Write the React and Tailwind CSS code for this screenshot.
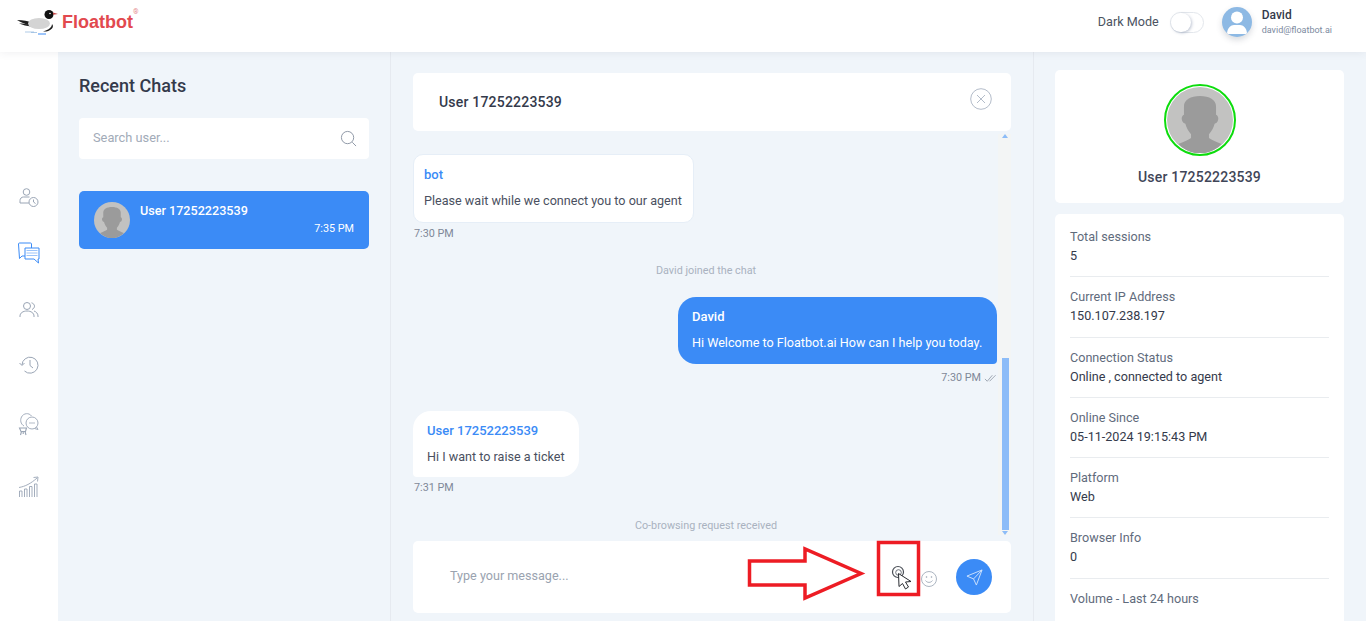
import React from "react";

const Silhouette = ({ className }) => (
  <svg viewBox="0 0 70 70" className={className}>
    <circle cx="35" cy="35" r="35" fill="#c2c2c1" />
    <path
      d="M35 9.500c-10 0-17 4-17 11v9c-2 1-3 3-2 6 .6 2 2 3 3.500 3.500 1 4 3 8 6 11v4c-3 2-8 4-13.500 6.500 6 6 14 10 23 10s17-4 23-10c-5.500-2.500-10.500-4.500-13.500-6.500v-4c3-3 5-7 6-11 1.500-.5 3-1.500 3.500-3.500 1-3 0-5-2-6v-9c0-7-7-11-17-11z"
      fill="#9b9b9b"
    />
  </svg>
);

const Logo = () => (
  <svg viewBox="0 0 44 26" className="h-[26px] w-[44px]">
    <path d="M0 11c6 .2 11 1 15 2.500l-2 3C9 15.500 4 13.500 0 11z" fill="#1c1c1c" />
    <path d="M2 14.500c4 0 8 .5 11 1.500l1 1.500c-4-.5-8-1.500-12-3z" fill="#1c1c1c" />
    <ellipse cx="22" cy="14.500" rx="11" ry="5.500" fill="#d4d4d4" />
    <path d="M35 15c0 3-3 6-9 7.500 3 .3 6-.2 9-3 1.500-1.500 1-3.500 0-4.500z" fill="#1c1c1c" />
    <circle cx="32" cy="5.500" r="4.500" fill="#111" />
    <circle cx="33" cy="4.500" r="0.800" fill="#fff" />
    <path d="M36 3.500l5 1.500-5 .8z" fill="#c64a4a" />
    <path d="M8 23h9M14 23.500h6" stroke="#8db4dc" strokeWidth="0.7" fill="none" />
    <path d="M21 25h8" stroke="#3b8bf6" strokeWidth="1" fill="none" />
  </svg>
);

const railStroke = { fill: "none", stroke: "#9aa5b5", strokeWidth: 1 };

const ScheduleIcon = () => (
  <svg viewBox="0 0 20 20" className="h-[20px] w-[20px]" {...railStroke}>
    <circle cx="7.500" cy="4" r="3.300" />
    <path d="M1 15v-2.500c0-2 1.500-3.500 3.500-3.500h6" />
    <path d="M1 15h9" />
    <circle cx="14.500" cy="14" r="4.500" />
    <path d="M14.500 11.500V14l2 1.500" />
  </svg>
);

const ChatsIcon = () => (
  <svg viewBox="0 0 22 22" className="h-[22px] w-[22px]" fill="none" stroke="#3b8bf6" strokeWidth="1">
    <path d="M7 14H4l-2.500 2.500L.5 2c0-.6.400-1 1-1h11c.6 0 1 .4 1 1v4" />
    <path d="M7 6h14v11h-1l.5 4L16 17H7z" fill="#fff" />
    <path d="M8.500 8.500h11M8.500 11h11M8.500 13.500h11" stroke="#9cc4f9" strokeWidth="1.200" />
  </svg>
);

const UsersIcon = () => (
  <svg viewBox="0 0 20 18" className="h-[18px] w-[20px]" {...railStroke}>
    <circle cx="8" cy="5" r="3.500" />
    <path d="M1 16v-1c0-3 3-5 7-5s7 2 7 5v1" />
    <path d="M12.500 1.800c2 .6 3 2 3 3.400s-1 2.600-2.500 3.300" />
    <path d="M15 10c2 .6 4 2.500 4 5v1" />
  </svg>
);

const HistoryIcon = () => (
  <svg viewBox="0 0 20 20" className="h-[20px] w-[20px]" {...railStroke}>
    <path d="M3 10a8 8 0 1 1 2.500 6" />
    <path d="M.5 8 3 10.500 5.500 8" />
    <path d="M11 5v5.500l3 2.500" />
  </svg>
);

const SupportIcon = () => (
  <svg viewBox="0 0 22 24" className="h-[24px] w-[22px]" {...railStroke} strokeWidth="0.9">
    <path d="M6 14C2.500 12 2 8 3.500 5 5.500 1 11 .5 13.500 4" />
    <circle cx="14" cy="11" r="6" />
    <path d="M11.500 11h1M13.500 11h1M15.500 11h1" strokeWidth="1.300" />
    <path d="M18.500 15l1.500 2.500-3.500-1" />
    <path d="M1.500 16h7l-1 3.500H3zM3.500 19.500l-1 3.500M7 19.500l1 3.500M5.200 19.500v2.500" strokeWidth="1.100" />
  </svg>
);

const GrowthIcon = () => (
  <svg viewBox="0 0 22 22" className="h-[22px] w-[22px]" {...railStroke} strokeWidth="0.9">
    <path d="M1.500 21v-6h2.500v6M6.500 21v-8H9v8M11.500 21V10.500H14V21M16.500 21V8H19v13" />
    <path d="M1 11.500c6-1 12-4 18-9.500" />
    <path d="M15.500 1.500 20 1l-.5 4.500" />
  </svg>
);

const RailItem = ({ children, className }) => (
  <div className={`flex w-[58px] items-center justify-center ${className}`}>{children}</div>
);

const InfoRow = ({ label, value, last }) => (
  <div className={`h-[60.300px] pt-[10px] ${last ? "" : "border-b border-[#e9ecef]"}`}>
    <div className="text-[12.600px] leading-[19px] text-[#5f6b7c]">{label}</div>
    <div className="text-[12.600px] leading-[19px] text-[#343a4b]">{value}</div>
  </div>
);

export default function App() {
  const rows = [
    ["Total sessions", "5"],
    ["Current IP Address", "150.107.238.197"],
    ["Connection Status", "Online , connected to agent"],
    ["Online Since", "05-11-2024 19:15:43 PM"],
    ["Platform", "Web"],
    ["Browser Info", "0"],
    ["Volume - Last 24 hours", ""],
  ];

  return (
    <div className="relative h-[621px] w-[1366px] overflow-hidden bg-[#f0f5fa] font-['Roboto',sans-serif] text-[#343a4b]">
      {/* top bar */}
      <header className="relative z-10 flex h-[52px] items-start justify-between bg-white shadow-[0_1px_8px_rgba(60,70,90,0.08)]">
        <div className="flex items-start pl-[17px] pt-[9px]">
          <Logo />
          <span className="ml-[1px] mt-[1px] font-['Liberation_Sans',sans-serif] text-[18px] font-bold leading-[24px] text-[#e2494f]">
            Floatbot
          </span>
          <span className="text-[7px] leading-[7px] text-[#e58a8d]">®</span>
        </div>
        <div className="flex items-center pr-[34px] pt-[7px]">
          <span className="text-[12.600px] text-[#4b5361]">Dark Mode</span>
          <div className="ml-[11px] h-[21px] w-[34px] rounded-full border border-[#e3e7ec] bg-white">
            <div className="h-[19px] w-[20px] rounded-full bg-white shadow-[1px_1px_3px_rgba(70,90,130,0.35)]" />
          </div>
          <div className="ml-[18px] h-[30px] w-[30px] overflow-hidden rounded-full bg-[#8db9e4] shadow-[0_3px_6px_rgba(60,70,90,0.2)]">
            <svg viewBox="0 0 30 30" className="h-[30px] w-[30px]">
              <circle cx="15" cy="10.500" r="6" fill="#fff" />
              <path d="M5 27c0-6 4-9 7-9h6c3 0 7 3 7 9z" fill="#fff" />
            </svg>
          </div>
          <div className="ml-[10px]">
            <div className="text-[12px] font-medium leading-[16px] text-[#343a4b]">David</div>
            <div className="text-[9px] leading-[14px] text-[#7c8aa0]">david@floatbot.ai</div>
          </div>
        </div>
      </header>

      <div className="flex h-[569px]">
        {/* icon rail */}
        <nav className="flex w-[58px] shrink-0 flex-col bg-white pt-[135px]">
          <RailItem className="h-[22px]"><ScheduleIcon /></RailItem>
          <RailItem className="mt-[31px] h-[26px]"><ChatsIcon /></RailItem>
          <RailItem className="mt-[34px] h-[20px]"><UsersIcon /></RailItem>
          <RailItem className="mt-[35px] h-[20px]"><HistoryIcon /></RailItem>
          <RailItem className="mt-[37px] h-[24px]"><SupportIcon /></RailItem>
          <RailItem className="mt-[39px] h-[24px]"><GrowthIcon /></RailItem>
        </nav>

        {/* recent chats */}
        <aside className="w-[333px] shrink-0 border-r border-[#e6eaf0] px-[21px]">
          <h2 className="mt-[22px] text-[18px] font-medium leading-[24px] text-[#343a4b]">Recent Chats</h2>
          <div className="mt-[20px] flex h-[41px] w-[290px] items-center justify-between rounded-[4px] bg-white pl-[14px] pr-[12px]">
            <span className="mb-[2px] text-[12.800px] text-[#a2abb8]">Search user...</span>
            <svg viewBox="0 0 18 18" className="h-[17px] w-[17px]" fill="none" stroke="#8a94a3" strokeWidth="1">
              <circle cx="8" cy="8" r="6.500" />
              <path d="M13 13l4 4" />
            </svg>
          </div>
          <div className="mt-[32px] flex h-[58px] w-[290px] rounded-[5px] bg-[#3b8bf6] px-[15px] pt-[11px]">
            <Silhouette className="h-[36px] w-[36px] shrink-0" />
            <div className="ml-[10px] flex-1 text-white">
              <div className="mt-[1px] text-[12.600px] font-medium leading-[16px]">User 17252223539</div>
              <div className="mt-[2px] text-right text-[10.800px] leading-[16px]">7:35 PM</div>
            </div>
          </div>
        </aside>

        {/* conversation */}
        <main className="flex w-[643px] shrink-0 flex-col border-r border-[#e6eaf0] px-[22px]">
          <div className="mt-[21px] flex h-[58px] shrink-0 items-center justify-between rounded-[5px] bg-white pl-[26px] pr-[19px]">
            <span className="text-[14px] font-medium tracking-[0.2px] text-[#343a4b]">User 17252223539</span>
            <svg viewBox="0 0 22 22" className="mb-[6px] h-[22px] w-[22px]" fill="none" stroke="#b4bdca" strokeWidth="1">
              <circle cx="11" cy="11" r="10.300" />
              <path d="M7 7l8 8M15 7l-8 8" />
            </svg>
          </div>

          <div className="relative h-[410px] shrink-0">
            {/* scrollbar */}
            <div className="absolute right-0 top-[3px] h-[401px] w-[13px] bg-[#f3f5f5]">
              <div className="absolute left-[4px] top-[224px] h-[172px] w-[7px] bg-[#8cbcf8]" />
              <div className="absolute left-[4px] top-0 h-0 w-0 border-x-[3px] border-b-[4px] border-x-transparent border-b-[#8cbcf8]" />
              <div className="absolute bottom-0 left-[4px] h-0 w-0 border-x-[3px] border-t-[4px] border-x-transparent border-t-[#8cbcf8]" />
            </div>

            <div className="w-[281px] pt-[23px]">
              <div className="h-[69px] rounded-[10px] border border-[#e6eef7] bg-white px-[10px] pt-[11px]">
                <div className="text-[13px] font-medium leading-[18px] text-[#3b8bf6]">bot</div>
                <div className="mt-[8px] text-[12.600px] leading-[18px] text-[#4a5060]">Please wait while we connect you to our agent</div>
              </div>
              <div className="mt-[4px] pl-[1px] text-[10.800px] leading-[14px] text-[#7f8898]">7:30 PM</div>
            </div>

            <div className="mt-[23px] pr-[12px] text-center text-[10.800px] leading-[14px] text-[#a9b2bf]">David joined the chat</div>

            <div className="ml-[265px] mt-[19px] h-[67px] w-[319px] rounded-l-[18px] rounded-br-[4px] rounded-tr-[18px] bg-[#3b8bf6] px-[14px] pt-[11px] text-white">
              <div className="text-[13px] font-medium leading-[18px]">David</div>
              <div className="mt-[8px] text-[12.600px] leading-[18px]">Hi Welcome to Floatbot.ai How can I help you today.</div>
            </div>
            <div className="mt-[7px] flex w-[584px] items-center justify-end text-[10.800px] leading-[14px] text-[#7f8898]">
              <span className="mr-[-1px]">7:30 PM</span>
              <svg viewBox="0 0 14 10" className="ml-[4px] h-[10px] w-[13px]" fill="none" stroke="#9aa3b0" strokeWidth="1">
                <path d="M1 6l2.500 2.500L9 2M6 8.500 12.500 2" />
              </svg>
            </div>

            <div className="mt-[26px] h-[66px] w-[166px] rounded-r-[18px] rounded-bl-[4px] rounded-tl-[18px] bg-white px-[14px] pt-[11px]">
              <div className="text-[13px] font-medium leading-[18px] text-[#3b8bf6]">User 17252223539</div>
              <div className="mt-[8px] text-[12.600px] leading-[18px] text-[#4a5060]">Hi I want to raise a ticket</div>
            </div>
            <div className="mt-[4px] pl-[1px] text-[10.800px] leading-[14px] text-[#7f8898]">7:31 PM</div>

            <div className="mt-[24px] pr-[12px] text-center text-[10.800px] leading-[14px] text-[#a9b2bf]">Co-browsing request received</div>
          </div>

          <div className="flex h-[72px] shrink-0 items-center justify-between rounded-[5px] bg-white pl-[37px] pr-[19px]">
            <span className="mb-[2px] text-[12.600px] text-[#9aa3b0]">Type your message...</span>
            <div className="flex items-center">
              <svg viewBox="0 0 16 16" className="mr-[19px] mt-[3px] h-[16px] w-[16px]" fill="none" stroke="#a3adba" strokeWidth="0.9">
                <circle cx="8" cy="8" r="7.500" />
                <circle cx="5.500" cy="6" r="0.500" />
                <circle cx="10.500" cy="6" r="0.500" />
                <path d="M4.500 9.500c1.500 2.500 5.500 2.500 7 0" />
              </svg>
              <div className="flex h-[36px] w-[36px] items-center justify-center rounded-full bg-[#3b8bf6]">
                <svg viewBox="0 0 18 18" className="h-[17px] w-[17px]" fill="none" stroke="#cfe2fc" strokeWidth="1">
                  <path d="M1 7.500 17 1l-6 16-3-6.500zM8 10.500 17 1" />
                </svg>
              </div>
            </div>
          </div>
        </main>

        {/* user info */}
        <aside className="w-[333px] shrink-0 pl-[21px] pr-[22px]">
          <div className="mt-[18px] flex h-[133px] w-[289px] flex-col items-center rounded-[5px] bg-white pt-[14px]">
            <div className="h-[72px] w-[72px] rounded-full border-2 border-[#0ddc0d] p-[1px]">
              <Silhouette className="h-full w-full" />
            </div>
            <div className="mt-[12px] text-[14px] font-medium leading-[18px] tracking-[0.2px] text-[#3f4658]">User 17252223539</div>
          </div>
          <div className="mt-[11px] h-[420px] w-[289px] rounded-[5px] bg-white px-[15px] pt-[3px]">
            {rows.map(([label, value], i) => (
              <InfoRow key={label} label={label} value={value} last={i === rows.length - 1} />
            ))}
          </div>
        </aside>
      </div>

      {/* annotation drawn over the screenshot */}
      <svg className="pointer-events-none absolute left-[740px] top-[535px] h-[75px] w-[190px]" viewBox="0 0 190 75" fill="none">
        <path d="M9.500 26H65V14l56 24.500L65 63V50H9.500z" stroke="#ed1c24" strokeWidth="3.500" />
        <rect x="138.500" y="7.500" width="40" height="52" stroke="#ed1c24" strokeWidth="3.500" />
        <circle cx="158" cy="37" r="5.500" stroke="#4a4f57" strokeWidth="1.200" />
        <circle cx="158.500" cy="37.500" r="2.800" stroke="#6b7078" strokeWidth="1" />
        <path d="M158.500 38.500l.5 13 3.500-3 3 5.500 3-2-3-5 5.500-.5z" fill="#fff" stroke="#2a2d33" strokeWidth="1" />
      </svg>
    </div>
  );
}
